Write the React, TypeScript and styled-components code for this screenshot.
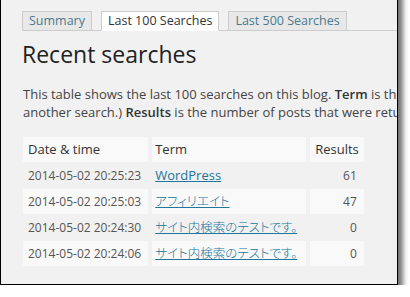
import React from "react";
import styled, { createGlobalStyle } from "styled-components";

const GlobalStyle = createGlobalStyle`
  html, body {
    margin: 0;
    padding: 0;
    background: #ffffff;
  }
  * {
    box-sizing: border-box;
  }
`;

const Frame = styled.div`
  width: 398px;
  height: 295px;
  margin-top: -10px;
  padding: 10px 0 0 21px;
  background: #f1f1f1;
  border: 1px solid #000000;
  box-shadow: 5px 5px 5px rgba(0, 0, 0, 0.55);
  overflow: hidden;
  font-family: "Open Sans", "Noto Sans CJK JP", sans-serif;
  color: #444444;
`;

const TabBar = styled.div`
  display: flex;
  align-items: flex-end;
  gap: 9px;
  margin-top: 10px;
  border-bottom: 1px solid #cccccc;
`;

const Tab = styled.div<{ $active?: boolean }>`
  padding: 0 6px;
  margin-bottom: -1px;
  font-size: 12.5px;
  line-height: 18px;
  white-space: nowrap;
  border: 1px solid #cccccc;
  border-bottom-color: ${p => (p.$active ? "#ffffff" : "#cccccc")};
  background: ${p => (p.$active ? "#ffffff" : "#e8e8e8")};
  color: ${p => (p.$active ? "#333333" : "#4a7a8f")};
`;

const Title = styled.h2`
  margin: 9px 0 0;
  font-size: 23px;
  font-weight: 400;
  line-height: 29px;
  color: #222222;
`;

const Intro = styled.p`
  margin: 16px 0 0 1px;
  font-size: 13px;
  line-height: 18px;
  white-space: nowrap;
  color: #444444;

  b {
    font-weight: 600;
    color: #333333;
  }
`;

const Table = styled.table`
  margin: 15px 0 0 -3px;
  border-collapse: separate;
  border-spacing: 4px 1px;
`;

const HeadCell = styled.th<{ $w: number; $right?: boolean; $pl?: number }>`
  width: ${p => p.$w}px;
  padding: 4px ${p => (p.$right ? 5 : 6)}px 4px ${p => p.$pl ?? 5}px;
  font-size: 13px;
  line-height: 17px;
  font-weight: 400;
  color: #333333;
  text-align: ${p => (p.$right ? "right" : "left")};
  background: #f9f9f9;
`;

const Row = styled.tr<{ $alt?: boolean }>`
  td {
    background: ${p => (p.$alt ? "#f9f9f9" : "transparent")};
  }
`;

const Cell = styled.td<{ $right?: boolean; $pl?: number; $pr?: number }>`
  padding: 4px ${p => p.$pr ?? 7}px 4px ${p => p.$pl ?? 5}px;
  font-size: 12px;
  line-height: 17px;
  color: #555555;
  white-space: nowrap;
  text-align: ${p => (p.$right ? "right" : "left")};
`;

const TermLink = styled.a<{ $cjk?: boolean }>`
  color: #21759b;
  text-decoration: underline;
  font-size: ${p => (p.$cjk ? "12.5px" : "13px")};
  font-weight: ${p => (p.$cjk ? 300 : 400)};
  font-feature-settings: ${p => (p.$cjk ? '"palt"' : "normal")};
`;

const rows = [
  { date: "2014-05-02 20:25:23", term: "WordPress", cjk: false, results: 61 },
  { date: "2014-05-02 20:25:03", term: "アフィリエイト", cjk: true, results: 47 },
  { date: "2014-05-02 20:24:30", term: "サイト内検索のテストです。", cjk: true, results: 0 },
  { date: "2014-05-02 20:24:06", term: "サイト内検索のテストです。", cjk: true, results: 0 },
];

export default function App() {
  return (
    <>
      <GlobalStyle />
      <Frame>
        <TabBar>
          <Tab>Summary</Tab>
          <Tab $active>Last 100 Searches</Tab>
          <Tab>Last 500 Searches</Tab>
        </TabBar>
        <Title>Recent searches</Title>
        <Intro>
          This table shows the last 100 searches on this blog. <b>Term</b> is the text that was searched for; you can click on it to see which posts contain that term. (This won't be counted as
          <br />
          another search.) <b>Results</b> is the number of posts that were returned from the search.
        </Intro>
        <Table>
          <thead>
            <tr>
              <HeadCell $w={124}>Date &amp; time</HeadCell>
              <HeadCell $w={154} $pl={3}>Term</HeadCell>
              <HeadCell $w={53} $right>Results</HeadCell>
            </tr>
          </thead>
          <tbody>
            {rows.map((r, i) => (
              <Row key={i} $alt={i % 2 === 1}>
                <Cell>{r.date}</Cell>
                <Cell $pl={3} $pr={3}>
                  <TermLink href="#" $cjk={r.cjk}>{r.term}</TermLink>
                </Cell>
                <Cell $right>{r.results}</Cell>
              </Row>
            ))}
          </tbody>
        </Table>
      </Frame>
    </>
  );
}
